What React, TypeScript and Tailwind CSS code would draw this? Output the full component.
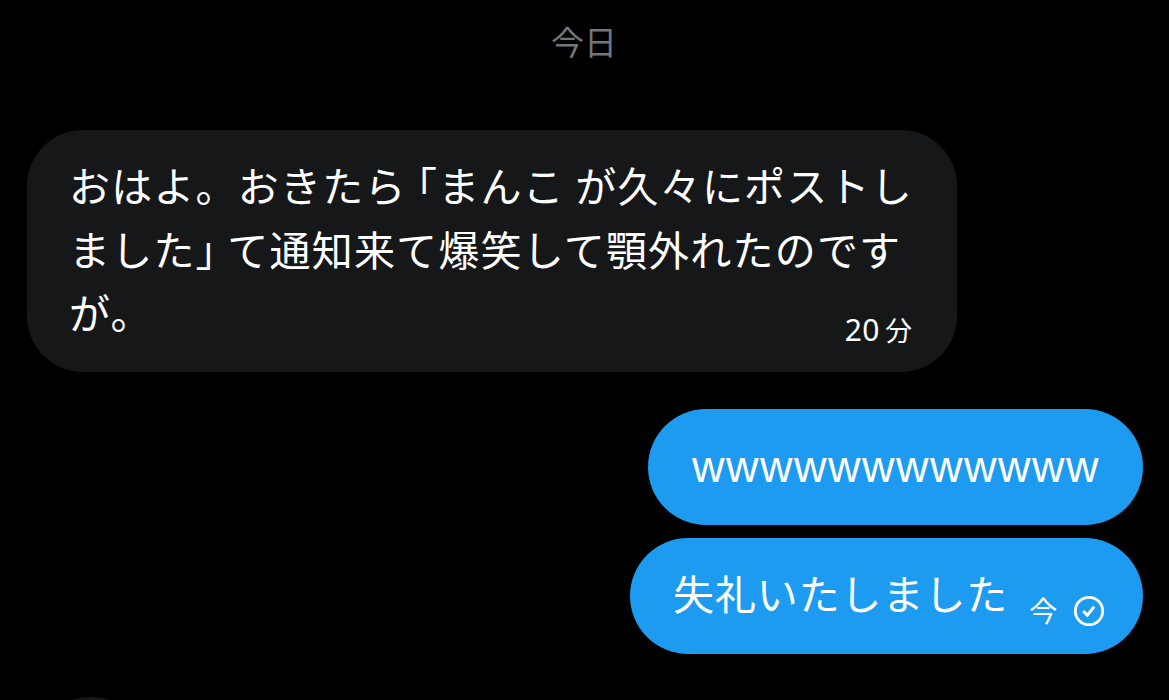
import type { ReactNode } from 'react';

const REPLIES = {
  laugh: 'wwwwwwwwwwww',
  apology: '失礼いたしました',
};

function SentIcon() {
  return (
    <svg
      width="32"
      height="32"
      viewBox="0 0 32 32"
      fill="none"
      xmlns="http://www.w3.org/2000/svg"
      aria-label="送信済み"
    >
      <circle cx="16" cy="16" r="13.7" stroke="currentColor" strokeWidth="2.8" />
      <path d="M10.2 16L14.3 20.2L21.2 11.6" stroke="currentColor" strokeWidth="3" />
    </svg>
  );
}

function SentBubble({
  className,
  children,
}: {
  className: string;
  children: ReactNode;
}) {
  return (
    <div
      className={`flex h-[116px] rounded-[58px] bg-[#1d9bf0] text-white ${className}`}
    >
      {children}
    </div>
  );
}

export default function App() {
  return (
    <main
      lang="ja"
      className="flex h-[700px] w-[1169px] flex-col overflow-hidden bg-black font-['Noto_Sans_CJK_JP',sans-serif]"
    >
      <div className="flex h-[130px] shrink-0 justify-center pr-px pt-[17px] text-[33px] leading-[48px] text-[#71767b]">
        今日
      </div>

      {/* Received */}
      <div className="ml-[27px] flex h-[242px] w-[930px] shrink-0 justify-between rounded-[56px] bg-[#161719] pl-[42px] pr-[45px] pt-[23px] text-white">
        <p className="whitespace-nowrap text-[41px] leading-[63.5px] tracking-[1.2px]">
          おはよ。おきたら
          <span className="ml-[10px] [font-feature-settings:'halt']">「</span>
          まんこ が久々にポストし
          <br />
          ました
          <span className="mr-[10px] [font-feature-settings:'halt']">」</span>
          て通知来て爆笑して顎外れたのです
          <br />
          が。
        </p>
        <span className="-ml-[100px] mb-[22px] self-end whitespace-nowrap text-[27px] leading-[40px]">
          <span className="mr-[5px] font-['Noto_Sans',sans-serif] text-[30px] tracking-[0.5px]">20</span>分
        </span>
      </div>

      {/* Sent */}
      <div className="mr-[26px] mt-[37px] flex shrink-0 flex-col items-end gap-[13px]">
        <SentBubble className="w-[495px] pl-[44px] pt-[26px]">
          <p className="font-['Liberation_Sans',sans-serif] text-[45px] leading-[63px] tracking-[1.5px]">
            {REPLIES.laugh}
          </p>
        </SentBubble>
        <SentBubble className="w-[513px] pl-[43px] pt-[23px]">
          <p className="whitespace-nowrap text-[41px] leading-[63px] tracking-[0.9px]">
            {REPLIES.apology}
          </p>
          <div className="ml-[21px] mt-[29px] flex h-[40px] items-center gap-[16px] text-[28px] leading-[40px]">
            <span>今</span>
            <div className="pt-[2px]">
              <SentIcon />
            </div>
          </div>
        </SentBubble>
      </div>

      <div className="ml-[27px] mt-[43px] h-[128px] w-[128px] shrink-0 rounded-full bg-[#161719]" />
    </main>
  );
}
